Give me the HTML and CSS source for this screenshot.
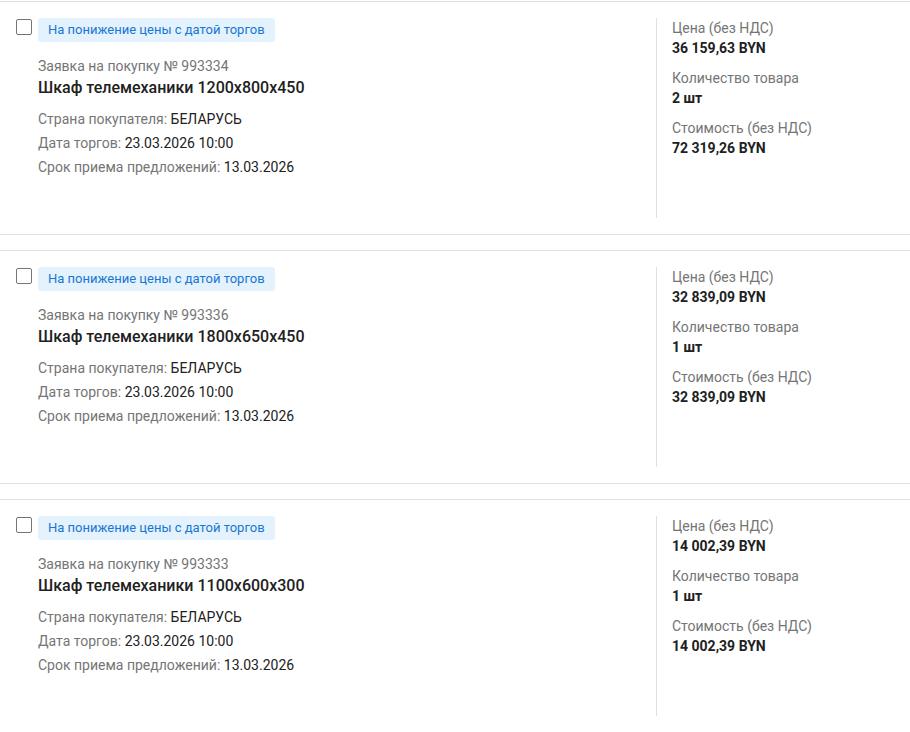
FILE: index.html
```html
<!DOCTYPE html>
<html lang="ru">
<head>
<meta charset="utf-8">
<title>Заявки</title>
<link rel="stylesheet" href="styles.css">
</head>
<body>
<div class="list">
  <div class="card">
    <div class="main">
      <span class="checkbox"></span>
      <div class="info">
        <span class="badge">На понижение цены с датой торгов</span>
        <div class="number">Заявка на покупку № 993334</div>
        <div class="title">Шкаф телемеханики 1200x800x450</div>
        <div class="rows">
          <div class="row"><span class="muted">Страна покупателя:</span> БЕЛАРУСЬ</div>
          <div class="row"><span class="muted">Дата торгов:</span> 23.03.2026 10:00</div>
          <div class="row"><span class="muted">Срок приема предложений:</span> 13.03.2026</div>
        </div>
      </div>
    </div>
    <div class="side">
      <div class="label">Цена (без НДС)</div>
      <div class="value">36 159,63 BYN</div>
      <div class="label">Количество товара</div>
      <div class="value">2 шт</div>
      <div class="label">Стоимость (без НДС)</div>
      <div class="value">72 319,26 BYN</div>
    </div>
  </div>
  <div class="card">
    <div class="main">
      <span class="checkbox"></span>
      <div class="info">
        <span class="badge">На понижение цены с датой торгов</span>
        <div class="number">Заявка на покупку № 993336</div>
        <div class="title">Шкаф телемеханики 1800x650x450</div>
        <div class="rows">
          <div class="row"><span class="muted">Страна покупателя:</span> БЕЛАРУСЬ</div>
          <div class="row"><span class="muted">Дата торгов:</span> 23.03.2026 10:00</div>
          <div class="row"><span class="muted">Срок приема предложений:</span> 13.03.2026</div>
        </div>
      </div>
    </div>
    <div class="side">
      <div class="label">Цена (без НДС)</div>
      <div class="value">32 839,09 BYN</div>
      <div class="label">Количество товара</div>
      <div class="value">1 шт</div>
      <div class="label">Стоимость (без НДС)</div>
      <div class="value">32 839,09 BYN</div>
    </div>
  </div>
  <div class="card">
    <div class="main">
      <span class="checkbox"></span>
      <div class="info">
        <span class="badge">На понижение цены с датой торгов</span>
        <div class="number">Заявка на покупку № 993333</div>
        <div class="title">Шкаф телемеханики 1100x600x300</div>
        <div class="rows">
          <div class="row"><span class="muted">Страна покупателя:</span> БЕЛАРУСЬ</div>
          <div class="row"><span class="muted">Дата торгов:</span> 23.03.2026 10:00</div>
          <div class="row"><span class="muted">Срок приема предложений:</span> 13.03.2026</div>
        </div>
      </div>
    </div>
    <div class="side">
      <div class="label">Цена (без НДС)</div>
      <div class="value">14 002,39 BYN</div>
      <div class="label">Количество товара</div>
      <div class="value">1 шт</div>
      <div class="label">Стоимость (без НДС)</div>
      <div class="value">14 002,39 BYN</div>
    </div>
  </div>
</div>
</body>
</html>
```

FILE: styles.css
```css
html, body {
  margin: 0;
  padding: 0;
  background: #ffffff;
}
body {
  font-family: Roboto, "Liberation Sans", sans-serif;
  color: #212121;
  font-size: 14px;
}
.list {
  padding-top: 1px;
  display: flex;
  flex-direction: column;
  gap: 15px;
}
.card {
  display: flex;
  height: 232px;
  border-top: 1px solid #e0e0e0;
  border-bottom: 1px solid #e0e0e0;
}
.main {
  flex: 1;
  display: flex;
  align-items: flex-start;
  gap: 6px;
  padding: 16px 0 0 16px;
}
.checkbox {
  width: 14px;
  height: 14px;
  margin-top: 1px;
  border: 1px solid #767676;
  border-radius: 2px;
  background: #fff;
  flex: none;
}
.info {
  display: flex;
  flex-direction: column;
  align-items: flex-start;
}
.badge {
  height: 24px;
  line-height: 24px;
  padding: 0 10px;
  border-radius: 3px;
  background: #e3f2fd;
  color: #1976d2;
  font-size: 13px;
}
.number {
  margin-top: 14px;
  line-height: 20px;
  color: #757575;
  font-size: 14px;
}
.title {
  line-height: 24px;
  font-size: 16px;
  font-weight: 500;
  color: #212121;
}
.rows {
  margin-top: 7px;
  display: flex;
  flex-direction: column;
}
.row {
  line-height: 24px;
  font-size: 14px;
  color: #212121;
}
.muted {
  color: #757575;
}
.side {
  width: 238px;
  flex: none;
  margin: 16px 0;
  padding-left: 15px;
  border-left: 1px solid #e0e0e0;
  display: flex;
  flex-direction: column;
}
.label {
  line-height: 20px;
  color: #757575;
}
.value {
  line-height: 20px;
  font-weight: 700;
  color: #212121;
  margin-bottom: 10px;
}
```
